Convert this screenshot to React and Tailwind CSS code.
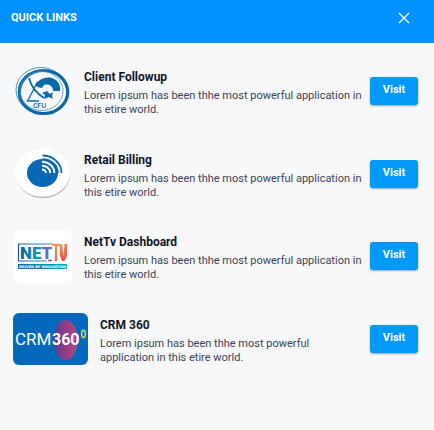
import React from "react";

function FollowupLogo() {
  return (
    <svg viewBox="0 0 59 53" className="h-[53px] w-[59px]" role="img" aria-label="Client Followup logo">
      <ellipse cx="28" cy="25" rx="25" ry="22.5" fill="none" stroke="#4f92bf" strokeWidth="1" />
      <ellipse cx="30.5" cy="27" rx="24.2" ry="21.5" fill="#f7f8fa" stroke="#0968a8" strokeWidth="3.2" />
      <ellipse cx="28.5" cy="26" rx="21.5" ry="19.5" fill="none" stroke="#4f92bf" strokeWidth="0.8" />
      <path d="M16 13 C18 21 23 28 31 33" fill="none" stroke="#0968a8" strokeWidth="1.8" />
      <path d="M24.500 17 L14.500 36 H26" fill="none" stroke="#0968a8" strokeWidth="1.300" />
      <path d="M22 20 C25 15 31 12 37 12.500 C44 14 48 19 47 26 L40 26 C40 21 36 18.500 31 20 L29 23 C27 23 24 22 22 20Z" fill="#0968a8" />
      <path d="M34 26 L37 29 L40 27 L39 31 L40 34 L36 32 L31 34 L32 30 L29 28Z" fill="#0968a8" />
      <text x="20" y="42.500" fontSize="7" fontWeight="500" fontFamily="Roboto, sans-serif" fill="#0968a8">CFU</text>
    </svg>
  );
}

function BillingLogo() {
  return (
    <svg viewBox="0 0 59 53" className="h-[53px] w-[59px] overflow-visible" role="img" aria-label="Retail Billing logo">
      <ellipse cx="30" cy="27.3" rx="27" ry="24" fill="#b9bcc0" />
      <ellipse cx="29.500" cy="25.8" rx="27.500" ry="24" fill="#fff" />
      <ellipse cx="29.500" cy="26" rx="15.500" ry="14" fill="#0968b4" />
      <g fill="none" stroke="#fff" strokeWidth="1.9">
        <path d="M29 22.500 A4 3.600 0 0 1 33 26" />
        <path d="M29 18.700 A8.200 7.400 0 0 1 37.200 26" />
        <path d="M29 14.800 A12.400 11.300 0 0 1 41.400 26" />
      </g>
      <path d="M29.500 12 A15.500 14 0 0 1 45 26" fill="none" stroke="#0968b4" strokeWidth="1.500" />
      <path d="M29.500 8.500 A19 17.500 0 0 1 48.500 26" fill="none" stroke="#0968b4" strokeWidth="1.9" />
    </svg>
  );
}

function NetTvLogo() {
  return (
    <svg viewBox="0 0 59 53" className="h-[53px] w-[59px]" role="img" aria-label="NetTv logo">
      <defs>
        <linearGradient id="net" gradientUnits="userSpaceOnUse" x1="5" y1="0" x2="40" y2="0">
          <stop offset="0" stopColor="#17559b" />
          <stop offset="0.500" stopColor="#0c96b8" />
          <stop offset="0.800" stopColor="#5474bd" />
          <stop offset="1" stopColor="#b052a5" />
        </linearGradient>
        <linearGradient id="tv" gradientUnits="userSpaceOnUse" x1="40" y1="14" x2="50" y2="31">
          <stop offset="0" stopColor="#f4a04c" />
          <stop offset="1" stopColor="#ec4e55" />
        </linearGradient>
        <linearGradient id="strip">
          <stop offset="0" stopColor="#126ba8" />
          <stop offset="1" stopColor="#08a7bd" />
        </linearGradient>
      </defs>
      <rect width="59" height="53" rx="7" fill="#fff" />
      <path d="M39 14 H5.500 V31 H34" fill="none" stroke="url(#net)" strokeWidth="1.200" />
      <text x="7" y="29" fontSize="17" fontWeight="900" fontFamily="Roboto, sans-serif" fill="url(#net)">NET</text>
      <path d="M35 30.500 H39" stroke="#b13e99" strokeWidth="1.500" />
      <path d="M39 14.800 H46.500 M43 15 V31" fill="none" stroke="url(#tv)" strokeWidth="2.200" />
      <path d="M46.500 14 H49 L50.500 26 L51.500 14 H54 V26 L51.500 31 H49 L47 26Z" fill="url(#tv)" />
      <rect x="5" y="34" width="49" height="5" fill="url(#strip)" />
      <text x="29.500" y="37.900" textAnchor="middle" fontSize="3.500" fontWeight="700" fontFamily="DejaVu Sans, sans-serif" fill="#fff">DRIVEN BY INNOVATION</text>
    </svg>
  );
}

function CrmLogo() {
  return (
    <svg viewBox="0 0 75 52" className="h-[52px] w-[75px]" role="img" aria-label="CRM 360 logo">
      <defs>
        <linearGradient id="orb">
          <stop offset="0" stopColor="#4c4299" />
          <stop offset="0.500" stopColor="#963c83" />
          <stop offset="1" stopColor="#b14b82" />
        </linearGradient>
      </defs>
      <rect width="75" height="52" rx="6" fill="#0568bf" />
      <ellipse cx="52.500" cy="27" rx="12" ry="20" fill="url(#orb)" />
      <text x="2" y="32" fontSize="17" fontFamily="Liberation Sans Narrow, Roboto, sans-serif" fill="#fff">CRM</text>
      <text x="39" y="32" fontSize="16" fontWeight="700" fontFamily="Liberation Sans Narrow, Roboto, sans-serif" fill="#fff">360</text>
      <ellipse cx="70.500" cy="21" rx="1.900" ry="3.700" fill="none" stroke="#d8df50" strokeWidth="1.400" />
    </svg>
  );
}

const links = [
  { title: "Client Followup", Logo: FollowupLogo },
  { title: "Retail Billing", Logo: BillingLogo },
  { title: "NetTv Dashboard", Logo: NetTvLogo },
  { title: "CRM 360", Logo: CrmLogo },
];

export default function App() {
  return (
    <div className="flex min-h-screen flex-col bg-[#f7f8fa] font-['Roboto',sans-serif]">
      <header className="flex items-start justify-between bg-[#0091ff] pt-2.5 pr-[22px] pb-[17px] pl-[11px] text-white">
        <h1 className="text-[11px] leading-4 font-bold">QUICK LINKS</h1>
        <button type="button" aria-label="Close" className="flex size-4 items-center justify-center">
          <svg viewBox="0 0 12 12" className="size-3" fill="none" stroke="currentColor" strokeWidth="1.300">
            <path d="M1 1 L11 11 M11 1 L1 11" />
          </svg>
        </button>
      </header>
      <main className="grid flex-1 pt-[7px] pr-4 pb-[50px] pl-[13px]">
        <ul className="grid auto-rows-fr">
          {links.map(({ title, Logo }) => (
            <li key={title} className="flex items-center">
              <div className="shrink-0">
                <Logo />
              </div>
              <div className="min-w-0 flex-1 pt-0.5 pr-2 pl-3">
                <h2 className="mb-0.5 text-[12px] leading-5 font-bold text-[#12151f]">{title}</h2>
                <p className="text-[11px] leading-[14px] text-[#3f4254]">
                  Lorem ipsum has been thhe most powerful application in this etire world.
                </p>
              </div>
              <button
                type="button"
                className="h-7 w-12 shrink-0 rounded-[3px] bg-[#0099f7] pb-0.5 text-[11px] leading-[14px] font-bold text-white shadow-[0_1px_2px_rgba(0,0,0,0.35)]"
              >
                Visit
              </button>
            </li>
          ))}
        </ul>
      </main>
    </div>
  );
}
